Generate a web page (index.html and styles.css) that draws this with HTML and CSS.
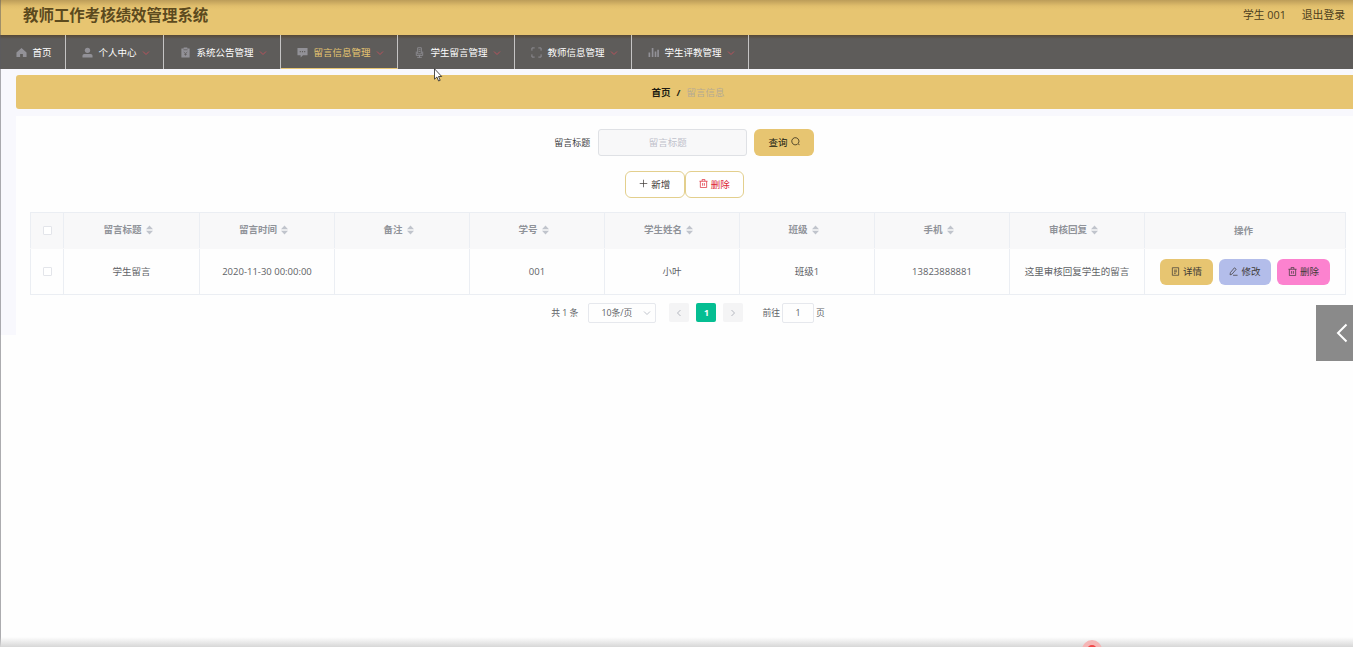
FILE: index.html
```
<!DOCTYPE html>
<html lang="zh-CN">
<head>
    <meta charset="UTF-8">
    <meta name="viewport" content="width=device-width, initial-scale=1.0">
    <title>教师工作考核绩效管理系统</title>
    <link rel="stylesheet" href="styles.css">
</head>
<body>
    <!-- Shared icon shapes -->
    <svg class="sprite">
        <symbol id="arrow" viewBox="0 0 8 8"><path d="M1 2.5l3 3 3-3" fill="none" stroke="currentColor"/></symbol>
        <symbol id="trash" viewBox="0 0 10 10"><path d="M.5 2.5h9M3.5 2.5v-2h3v2M1.500 2.500v7h7v-7M4 4.500v3M6 4.500v3" fill="none" stroke="currentColor" stroke-width=".8"/></symbol>
        <symbol id="sort" viewBox="0 0 7 10"><path d="M3.500 .5L7 4.200H0zM3.500 9.500L7 5.800H0z" fill="currentColor"/></symbol>
    </svg>

    <header class="header">
        <h1>教师工作考核绩效管理系统</h1>
        <div class="user">
            <span>学生 001</span>
            <span>退出登录</span>
        </div>
    </header>

    <nav class="nav">
        <a class="nav-item home">
            <svg class="icon" viewBox="0 0 12 12"><path d="M6 1L11.500 6V11H7.500V7.500h-3V11H.5V6z" fill="currentColor"/></svg>
            <span>首页</span>
        </a>
        <a class="nav-item person">
            <svg class="icon" viewBox="0 0 12 12"><circle cx="6" cy="3.600" r="2.900" fill="currentColor"/><path d="M.5 11.500V9.500q0-2 2-2h7q2 0 2 2v2z" fill="currentColor"/></svg>
            <span>个人中心</span>
            <svg class="arrow"><use href="#arrow"/></svg>
        </a>
        <a class="nav-item">
            <svg class="icon" viewBox="0 0 12 12"><path d="M1.500 1.500H4V.5h4v1h2.500v10h-9z" fill="currentColor"/><path d="M3.800 3h4.400M4 5.500L6 7l2-1.500M6 7v2.500M4.500 8h3" fill="none" stroke="#5e5c5a" stroke-width=".8"/></svg>
            <span>系统公告管理</span>
            <svg class="arrow"><use href="#arrow"/></svg>
        </a>
        <a class="nav-item active">
            <svg class="icon" viewBox="0 0 12 12"><path d="M.5 1h11v8H6.500L4 11.500V9H.5z" fill="currentColor"/><path d="M3 5h1.200M5.400 5h1.200M7.800 5H9" stroke="#5e5c5a" stroke-width="1.200"/></svg>
            <span>留言信息管理</span>
            <svg class="arrow"><use href="#arrow"/></svg>
        </a>
        <a class="nav-item">
            <svg class="icon" viewBox="0 0 12 12"><path d="M4 .8h4v6.700H4zM2.500 5v4.200h7V5M6 9v2.300M3.500 11.300h5M5 3h2M5 5h2" fill="none" stroke="currentColor" stroke-width=".9"/></svg>
            <span>学生留言管理</span>
            <svg class="arrow"><use href="#arrow"/></svg>
        </a>
        <a class="nav-item">
            <svg class="icon" viewBox="0 0 12 12"><path d="M1 4V1h3M8 1h3v3M11 8v3H8M4 11H1V8" fill="none" stroke="currentColor"/></svg>
            <span>教师信息管理</span>
            <svg class="arrow"><use href="#arrow"/></svg>
        </a>
        <a class="nav-item">
            <svg class="icon" viewBox="0 0 12 12"><path d="M1.500 11V6M5 11V1M8.200 11V5M11 11V3" fill="none" stroke="currentColor" stroke-width="1.800"/></svg>
            <span>学生评教管理</span>
            <svg class="arrow"><use href="#arrow"/></svg>
        </a>
    </nav>

    <main class="main">
        <div class="breadcrumb"><b>首页</b><b>/</b><span>留言信息</span></div>

        <section class="content">
            <form class="search">
                <label for="title">留言标题</label>
                <input type="text" id="title" placeholder="留言标题">
                <button type="button" class="btn gold">查询
                    <svg class="btn-icon" viewBox="0 0 10 10"><path d="M7.300 7.900a4 4 0 1 1 .7-.7L9.300 9" fill="none" stroke="currentColor" stroke-width=".8"/></svg>
                </button>
            </form>

            <div class="toolbar">
                <button type="button" class="btn outline">
                    <svg class="btn-icon" viewBox="0 0 10 10"><path d="M5 .8v8.400M.8 5h8.400" stroke="currentColor" stroke-width=".8"/></svg>
                    新增
                </button>
                <button type="button" class="btn outline danger">
                    <svg class="btn-icon"><use href="#trash"/></svg>
                    删除
                </button>
            </div>

            <table class="table">
                <colgroup>
                    <col class="col-check">
                    <col class="col-title">
                    <col span="7" class="col-data">
                    <col>
                </colgroup>
                <thead>
                    <tr>
                        <th><span class="check"></span></th>
                        <th class="sortable">留言标题<svg class="sort"><use href="#sort"/></svg></th>
                        <th class="sortable">留言时间<svg class="sort"><use href="#sort"/></svg></th>
                        <th class="sortable">备注<svg class="sort"><use href="#sort"/></svg></th>
                        <th class="sortable">学号<svg class="sort"><use href="#sort"/></svg></th>
                        <th class="sortable">学生姓名<svg class="sort"><use href="#sort"/></svg></th>
                        <th class="sortable">班级<svg class="sort"><use href="#sort"/></svg></th>
                        <th class="sortable">手机<svg class="sort"><use href="#sort"/></svg></th>
                        <th class="sortable">审核回复<svg class="sort"><use href="#sort"/></svg></th>
                        <th>操作</th>
                    </tr>
                </thead>
                <tbody>
                    <tr>
                        <td><span class="check"></span></td>
                        <td>学生留言</td>
                        <td>2020-11-30 00:00:00</td>
                        <td></td>
                        <td>001</td>
                        <td>小叶</td>
                        <td>班级1</td>
                        <td>13823888881</td>
                        <td>这里审核回复学生的留言</td>
                        <td>
                            <div class="actions">
                                <button type="button" class="btn gold">
                                    <svg class="btn-icon" viewBox="0 0 10 10"><path d="M1.500 .8h7v8.400h-7zM3.300 3.500h3.400M3.300 5.300h3.400M3.300 7h2" fill="none" stroke="currentColor" stroke-width=".8"/></svg>
                                    详情
                                </button>
                                <button type="button" class="btn blue">
                                    <svg class="btn-icon" viewBox="0 0 10 10"><path d="M1.500 6.300L6 .9l2 1.600-4.600 5.400-2.200.8zM4.500 9.200h5" fill="none" stroke="currentColor" stroke-width=".8"/></svg>
                                    修改
                                </button>
                                <button type="button" class="btn pink">
                                    <svg class="btn-icon"><use href="#trash"/></svg>
                                    删除
                                </button>
                            </div>
                        </td>
                    </tr>
                </tbody>
            </table>

            <div class="pagination">
                <span class="total">共 1 条</span>
                <span class="page-size">10条/页<svg class="arrow"><use href="#arrow"/></svg></span>
                <span class="pager prev"><svg class="arrow"><use href="#arrow"/></svg></span>
                <span class="pager current">1</span>
                <span class="pager next"><svg class="arrow"><use href="#arrow"/></svg></span>
                <span class="jump">前往<span class="jump-input">1</span>页</span>
            </div>
        </section>
    </main>

    <!-- Things floating over the page -->
    <div class="left-edge"></div>
    <div class="bottom-shade"></div>
    <div class="record-dot"></div>
    <div class="drawer">
        <svg viewBox="0 0 12 20"><path d="M10.500 1.500L2 10l8.500 8.500" fill="none" stroke="#fff" stroke-width="2"/></svg>
    </div>
    <svg class="cursor" viewBox="0 0 9 14"><path d="M.5.8v10.400l2.400-2.200 1.700 4 1.600-.7-1.700-3.800h3.200z" fill="#fff" stroke="#222" stroke-width=".8"/></svg>
</body>
</html>
```
FILE: styles.css
```
* {
    margin: 0;
    padding: 0;
    box-sizing: border-box;
}

body {
    position: relative;
    height: 647px;
    overflow: hidden;
    background-color: #fefefe;
    color: #606266;
    font-family: "Open Sans", "Noto Sans CJK SC", sans-serif;
    font-size: 9.5px;
    line-height: 14px;
}

svg {
    display: block;
    flex: none;
}

.sprite {
    position: absolute;
    width: 0;
    height: 0;
}

/* Header */
.header {
    display: flex;
    justify-content: space-between;
    height: 35px;
    padding: 4px 8px 0 23px;
    background: linear-gradient(#bc9d59, #e0be6c 6px, #e7c571 10px);
    color: #5c4a1e;
}

h1 {
    font-size: 15.45px;
    line-height: 22px;
}

.user {
    display: flex;
    gap: 16px;
    color: #4b3d1c;
    font-size: 10.8px;
    line-height: 22px;
}

/* Menu */
.nav {
    display: flex;
    height: 34px;
    background: linear-gradient(#564836, #5e5c5a 4px);
    color: #fff;
}

.nav-item {
    display: flex;
    align-items: center;
    width: 117px;
    padding: 1px 0 0 16px;
    border-right: 1px solid #c5c4c4;
}

.nav-item.home {
    width: 66px;
}

.nav-item.person {
    width: 98px;
}

.nav-item.active {
    padding-top: 2px;
    color: #e7c571;
    border-bottom: 1px solid #e7c571;
}

.nav-item .icon {
    width: 11px;
    height: 11px;
    margin-right: 5.5px;
    color: #929197;
}

.arrow {
    width: 8px;
    height: 8px;
}

.nav-item .arrow {
    margin-left: 5px;
    color: #b8525c;
}

/* Page body */
.main {
    height: 266px;
    padding: 6px 0 0 16px;
    background-color: #f8f8fd;
}

.breadcrumb {
    display: flex;
    justify-content: center;
    align-items: center;
    gap: 6px;
    height: 34px;
    padding: 2px 0 0 7px;
    border-radius: 3px 0 0 3px;
    background-color: #e7c571;
    color: #201c12;
}

.breadcrumb span {
    color: #b5aa94;
}

.content {
    height: 219px;
    margin-top: 7px;
    padding: 13px 7px 0 14px;
    background-color: #fefefe;
}

.search {
    display: flex;
    align-items: center;
    justify-content: center;
    height: 27px;
    padding-right: 8px;
    color: #404144;
    font-size: 9px;
}

.search input {
    width: 149px;
    height: 27px;
    margin: 0 7px 0 8px;
    padding-right: 10px;
    border: 1px solid #dfe1e5;
    border-radius: 3px;
    background-color: #f8f8f9;
    font-family: inherit;
    font-size: 9.5px;
    text-align: center;
}

.search input::placeholder {
    color: #bfc1cb;
}

.btn {
    display: flex;
    align-items: center;
    justify-content: center;
    gap: 3px;
    width: 52.5px;
    height: 26px;
    padding-bottom: 1px;
    border: none;
    border-radius: 6px;
    color: #3f3b38;
    font-family: inherit;
    font-size: 9.5px;
}

.btn-icon {
    width: 9px;
    height: 9px;
}

.gold {
    background-color: #e7c571;
}

.blue {
    background-color: #b3bdea;
}

.pink {
    background-color: #fc82cf;
}

.search .btn,
.toolbar .btn {
    width: 59.5px;
    height: 27px;
    padding-bottom: 2px;
}

.search .btn {
    color: #201c12;
}

.toolbar .outline {
    border: 1px solid #e3cf8d;
    background-color: #fff;
}

.danger {
    color: #dc2633;
}

.toolbar {
    display: flex;
    justify-content: center;
    margin: 15px 0 14px;
    padding-right: 7px;
}

/* Data table */
.table {
    width: 1316px;
    table-layout: fixed;
    border-collapse: collapse;
    border: 1px solid #ebeef3;
    text-align: center;
}

.col-check {
    width: 33px;
}

.col-title {
    width: 136px;
}

.col-data {
    width: 135px;
}

th, td {
    border: 1px solid #ebeef3;
    vertical-align: middle;
    white-space: nowrap;
}

th {
    height: 36px;
    border-bottom-color: #f8f8f9;
    background-color: #f8f8f9;
    color: #909399;
}

.sortable {
    padding: 0 7px 1px 0;
}

th:last-child {
    padding-right: 3px;
}

td {
    height: 46px;
}

.check {
    display: block;
    width: 9px;
    height: 9px;
    margin: 0 auto;
    border: 1px solid #e3e5ea;
    border-radius: 1px;
    background-color: #fff;
}

.sort {
    display: inline-block;
    width: 7px;
    height: 10px;
    margin-left: 4px;
    vertical-align: -2px;
    color: #c0c4cc;
}

.actions {
    display: flex;
    justify-content: center;
    gap: 6px;
}

/* Pagination */
.pagination {
    display: flex;
    align-items: center;
    justify-content: center;
    margin-top: 8px;
    height: 20px;
    font-size: 8.8px;
}

.page-size {
    display: flex;
    align-items: center;
    justify-content: space-between;
    width: 68px;
    height: 20px;
    margin: 0 13px 0 10px;
    padding: 0 4px 0 12px;
    border: 1px solid #e6e8ed;
    border-radius: 2px;
}

.page-size .arrow {
    color: #c0c4cc;
}

.pager {
    display: flex;
    align-items: center;
    justify-content: center;
    width: 20px;
    height: 19px;
    margin-bottom: 1px;
    border-radius: 2px;
    background-color: #f4f4f5;
    color: #b4b7bf;
}

.prev .arrow {
    transform: rotate(90deg);
}

.next .arrow {
    transform: rotate(-90deg);
}

.current {
    margin: 0 7px 1px;
    background-color: #05be92;
    color: #fff;
    font-weight: bold;
}

.jump {
    display: flex;
    align-items: center;
    margin-left: 19px;
}

.jump-input {
    width: 32px;
    height: 20px;
    margin: 0 2px;
    border: 1px solid #e6e8ed;
    border-radius: 2px;
    line-height: 18px;
    text-align: center;
}

/* Overlays */
.left-edge {
    position: absolute;
    left: 0;
    top: 0;
    width: 1px;
    height: 647px;
    background-color: rgba(90, 90, 95, 0.5);
}

.bottom-shade {
    position: absolute;
    left: 0;
    bottom: 0;
    width: 100%;
    height: 10px;
    background: linear-gradient(rgba(215, 215, 215, 0), #d7d7d7);
}

.record-dot {
    position: absolute;
    left: 1082px;
    top: 640px;
    width: 20px;
    height: 20px;
    border: 5px solid #f5b5b5;
    border-radius: 50%;
    background-color: #f04848;
}

.drawer {
    position: absolute;
    right: 0;
    top: 305px;
    display: flex;
    align-items: center;
    justify-content: flex-end;
    width: 37px;
    height: 56px;
    padding-right: 5px;
    background-color: #8a8a8a;
}

.drawer svg {
    width: 12px;
    height: 20px;
}

.cursor {
    position: absolute;
    left: 434px;
    top: 68px;
    width: 9px;
    height: 14px;
}
```
